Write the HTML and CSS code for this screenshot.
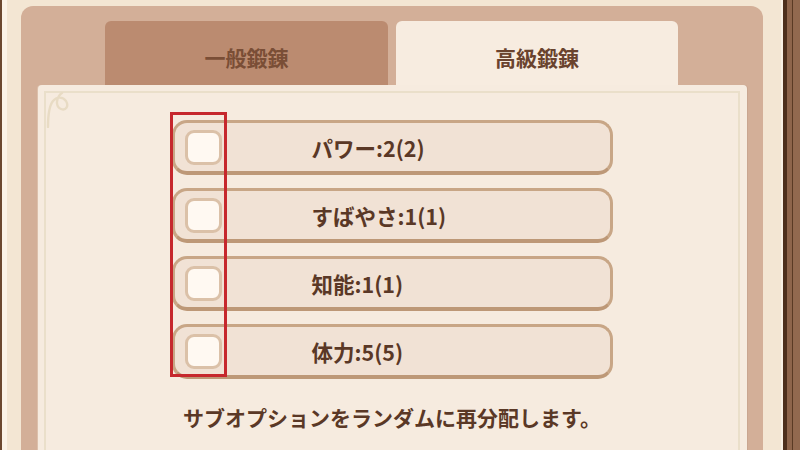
FILE: index.html
```html
<!DOCTYPE html>
<html lang="ja">
<head>
<meta charset="utf-8">
<link rel="stylesheet" href="styles.css">
</head>
<body>
<div class="screen">
  <div class="panel">
    <div class="tabs">
      <div class="tab tab-off">一般鍛錬</div>
      <div class="tab tab-on">高級鍛錬</div>
    </div>
    <div class="content">
      <div class="inner">
        <svg class="leaf" width="30" height="36" viewBox="0 0 30 36"><path d="M2 35 C2 24 3 14 7 9 C11 4 17 5 20 9 C23 14 20 19 15 17 C10 15 10 8 13 4 C14 2.5 15 1.5 16 1" fill="none" stroke="#e8dbc4" stroke-width="2.4" stroke-linecap="round"/></svg>
        <div class="list">
          <div class="row"><span class="box"></span><span class="label">パワー:2(2)</span></div>
          <div class="row"><span class="box"></span><span class="label">すばやさ:1(1)</span></div>
          <div class="row"><span class="box"></span><span class="label">知能:1(1)</span></div>
          <div class="row"><span class="box"></span><span class="label">体力:5(5)</span></div>
          <div class="highlight"></div>
        </div>
        <p class="desc">サブオプションをランダムに再分配します。</p>
      </div>
    </div>
  </div>
  <div class="rail"></div>
</div>
</body>
</html>
```

FILE: styles.css
```css
html, body {
  margin: 0;
  padding: 0;
}
body {
  width: 800px;
  height: 450px;
  overflow: hidden;
  font-family: "Noto Sans CJK JP", "Noto Sans", sans-serif;
}
.screen {
  display: flex;
  height: 450px;
  box-sizing: border-box;
  border-left: 2px solid #6b4830;
  background: linear-gradient(to right, #fbf3e7 0, #fbf3e7 5px, #f3e6d3 5px);
  padding: 6px 0 0 19px;
}
.panel {
  width: 742px;
  flex: none;
  background: #d3af98;
  border-radius: 12px 12px 0 0;
  padding: 15px 16px 0 17px;
  box-sizing: border-box;
  display: flex;
  flex-direction: column;
}
.tabs {
  display: flex;
  gap: 8px;
  padding-left: 67px;
  height: 64px;
}
.tab {
  width: 283px;
  height: 72px;
  border-radius: 6px 6px 0 0;
  box-sizing: border-box;
  text-align: center;
  font-size: 21px;
  font-weight: 700;
  line-height: 30px;
  padding-top: 21px;
}
.tab-off {
  background: #bb8b70;
  color: #7a4e36;
}
.tab-on {
  width: 282px;
  background: #f7ece0;
  color: #6a432e;
}
.content {
  position: relative;
  flex: 1;
  background: #f6ebdf;
  border-radius: 4px 4px 0 0;
  box-shadow: -1px 0 0 #dcc0ab, 1px 0 0 #c9a690;
  padding: 6px 7px 0 6px;
}
.inner {
  position: relative;
  height: 100%;
  box-sizing: border-box;
  border: 2px solid #eadfca;
  border-bottom: none;
  padding-top: 27px;
}
.leaf {
  position: absolute;
  left: 0;
  top: -1px;
}
.list {
  position: relative;
  width: 441px;
  margin: 0 auto;
  display: flex;
  flex-direction: column;
  gap: 13px;
}
.row {
  height: 55px;
  box-sizing: border-box;
  background: #f1e2d5;
  border: 3px solid #c8a686;
  border-bottom: 4px solid #bd9877;
  border-radius: 15px;
  display: flex;
  align-items: center;
  padding-left: 10px;
}
.box {
  width: 37px;
  height: 35px;
  box-sizing: border-box;
  border: 3px solid #dbc1a8;
  border-radius: 9px;
  background: #fff9f2;
  flex: none;
}
.label {
  margin-left: 90px;
  font-size: 21.5px;
  font-weight: 700;
  color: #5a3826;
  line-height: 28px;
  padding-top: 2px;
}
.highlight {
  position: absolute;
  left: -2px;
  top: -8px;
  width: 57px;
  height: 265px;
  box-sizing: border-box;
  border: 3px solid #c6282d;
}
.desc {
  margin: 24px 0 0;
  text-align: center;
  font-size: 21px;
  font-weight: 700;
  line-height: 28px;
  color: #5a3826;
}
.rail {
  flex: none;
  width: 19px;
  margin-left: 18px;
  background: linear-gradient(to right,
    #f9f0e3 0, #f9f0e3 2px,
    #4d2f1c 2px, #4d2f1c 6px,
    #8e654b 6px, #8e654b 11px,
    #5a3a24 11px, #5a3a24 12px,
    #92694f 12px);
  margin-top: -6px;
}
```
